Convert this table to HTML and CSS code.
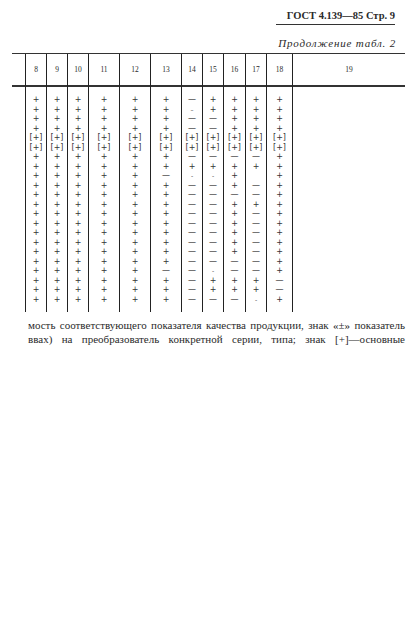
FILE: index.html
```html
<!DOCTYPE html>
<html lang="ru">
<head>
<meta charset="utf-8">
<title>ГОСТ 4.139—85 Стр. 9</title>
<link rel="stylesheet" href="styles.css">
</head>
<body>
<div class="page">
  <div class="top"><div class="gost">ГОСТ 4.139—85 Стр. 9</div></div>
  <div class="cont">Продолжение табл. 2</div>
  <div class="tbl">
    <div class="col first"><div class="h"></div><div class="b"></div></div>
    <div class="col"><div class="h">8</div><div class="b"><span>+</span><span>+</span><span>+</span><span>+</span><span>[+]</span><span>[+]</span><span>+</span><span>+</span><span>+</span><span>+</span><span>+</span><span>+</span><span>+</span><span>+</span><span>+</span><span>+</span><span>+</span><span>+</span><span>+</span><span>+</span><span>+</span><span>+</span></div></div>
    <div class="col"><div class="h">9</div><div class="b"><span>+</span><span>+</span><span>+</span><span>+</span><span>[+]</span><span>[+]</span><span>+</span><span>+</span><span>+</span><span>+</span><span>+</span><span>+</span><span>+</span><span>+</span><span>+</span><span>+</span><span>+</span><span>+</span><span>+</span><span>+</span><span>+</span><span>+</span></div></div>
    <div class="col"><div class="h">10</div><div class="b"><span>+</span><span>+</span><span>+</span><span>+</span><span>[+]</span><span>[+]</span><span>+</span><span>+</span><span>+</span><span>+</span><span>+</span><span>+</span><span>+</span><span>+</span><span>+</span><span>+</span><span>+</span><span>+</span><span>+</span><span>+</span><span>+</span><span>+</span></div></div>
    <div class="col"><div class="h">11</div><div class="b"><span>+</span><span>+</span><span>+</span><span>+</span><span>[+]</span><span>[+]</span><span>+</span><span>+</span><span>+</span><span>+</span><span>+</span><span>+</span><span>+</span><span>+</span><span>+</span><span>+</span><span>+</span><span>+</span><span>+</span><span>+</span><span>+</span><span>+</span></div></div>
    <div class="col"><div class="h">12</div><div class="b"><span>+</span><span>+</span><span>+</span><span>+</span><span>[+]</span><span>[+]</span><span>+</span><span>+</span><span>+</span><span>+</span><span>+</span><span>+</span><span>+</span><span>+</span><span>+</span><span>+</span><span>+</span><span>+</span><span>+</span><span>+</span><span>+</span><span>+</span></div></div>
    <div class="col"><div class="h">13</div><div class="b"><span>+</span><span>+</span><span>+</span><span>+</span><span>[+]</span><span>[+]</span><span>+</span><span>+</span><span class="d">—</span><span>+</span><span>+</span><span>+</span><span>+</span><span>+</span><span>+</span><span>+</span><span>+</span><span>+</span><span class="d">—</span><span>+</span><span>+</span><span>+</span></div></div>
    <div class="col"><div class="h">14</div><div class="b"><span class="d">—</span><span class="s">–</span><span class="d">—</span><span class="d">—</span><span>[+]</span><span>[+]</span><span class="d">—</span><span>+</span><span class="s">-</span><span class="d">—</span><span class="d">—</span><span class="d">—</span><span class="d">—</span><span class="d">—</span><span class="d">—</span><span class="d">—</span><span class="d">—</span><span class="d">—</span><span class="d">—</span><span class="d">—</span><span class="d">—</span><span class="d">—</span></div></div>
    <div class="col"><div class="h">15</div><div class="b"><span>+</span><span>+</span><span class="d">—</span><span class="d">—</span><span>[+]</span><span>[+]</span><span class="d">—</span><span>+</span><span class="s">-</span><span class="d">—</span><span class="d">—</span><span class="d">—</span><span class="d">—</span><span class="d">—</span><span class="d">—</span><span class="d">—</span><span class="d">—</span><span class="d">—</span><span class="s">-</span><span>+</span><span>+</span><span class="d">—</span></div></div>
    <div class="col"><div class="h">16</div><div class="b"><span>+</span><span>+</span><span>+</span><span>+</span><span>[+]</span><span>[+]</span><span class="d">—</span><span>+</span><span>+</span><span>+</span><span class="d">—</span><span>+</span><span>+</span><span>+</span><span>+</span><span>+</span><span>+</span><span class="d">—</span><span class="d">—</span><span>+</span><span>+</span><span class="d">—</span></div></div>
    <div class="col"><div class="h">17</div><div class="b"><span>+</span><span>+</span><span>+</span><span>+</span><span>[+]</span><span>[+]</span><span class="d">—</span><span>+</span><span></span><span class="d">—</span><span class="d">—</span><span>+</span><span class="d">—</span><span class="d">—</span><span class="d">—</span><span class="d">—</span><span class="d">—</span><span class="d">—</span><span class="d">—</span><span>+</span><span>+</span><span class="s">-</span></div></div>
    <div class="col"><div class="h">18</div><div class="b"><span>+</span><span>+</span><span>+</span><span>+</span><span>[+]</span><span>[+]</span><span>+</span><span>+</span><span>+</span><span>+</span><span>+</span><span>+</span><span>+</span><span>+</span><span>+</span><span>+</span><span>+</span><span>+</span><span>+</span><span class="d">—</span><span class="d">—</span><span>+</span></div></div>
    <div class="col last"><div class="h">19</div><div class="b"></div></div>
  </div>
  <div class="text">
    <div class="line">мость соответствующего показателя качества продукции, знак «±» показатель</div>
    <div class="line">ввах) на преобразователь конкретной серии, типа; знак [+]—основные</div>
  </div>
</div>
</body>
</html>
```
FILE: styles.css
```css
html, body {
  margin: 0;
  padding: 0;
  background: #fff;
}
.page {
  width: 417px;
  height: 623px;
  background: #fff;
  color: #2a2a2a;
  font-family: "Liberation Serif", "Times New Roman", serif;
  overflow: hidden;
}
.top {
  display: flex;
  justify-content: flex-end;
  padding-top: 10px;
  padding-right: 22px;
}
.gost {
  font-weight: bold;
  font-size: 10.5px;
  line-height: 12px;
  padding-left: 11px;
  padding-bottom: 2px;
  border-bottom: 1px solid #333;
}
.cont {
  margin-top: 12px;
  margin-right: 21px;
  text-align: right;
  font-style: italic;
  font-size: 11px;
  line-height: 12px;
  letter-spacing: 0.8px;
}
.tbl {
  margin-top: 4px;
  margin-left: 12px;
  width: 393px;
  display: grid;
  grid-template-columns: 13px 21px 21px 21px 31px 31px 31px 21px 21px 22px 21px 26px 113px;
  border-top: 1.5px solid #333;
}
.col {
  display: flex;
  flex-direction: column;
  border-left: 1px solid #222;
}
.col.first {
  border-left: none;
}
.col.last {
  border-left-width: 1.5px;
}
.h {
  height: 31px;
  display: flex;
  align-items: center;
  justify-content: center;
  font-size: 7.5px;
  border-bottom: 2px solid #333;
}
.b {
  height: 209px;
  padding: 8px 0;
  display: flex;
  flex-direction: column;
  color: #333;
  opacity: 0.99;
}
.b span {
  display: block;
  height: 9.5px;
  line-height: 9.5px;
  font-family: "DejaVu Sans", sans-serif;
  font-size: 8px;
  text-align: center;
}
.b span.d {
  font-size: 8px;
}
.b span.s {
  font-size: 6px;
}
.text {
  margin-top: 6px;
  padding-left: 28px;
  font-size: 11px;
  line-height: 14px;
}
.line {
  width: 377px;
  text-align: justify;
  text-align-last: justify;
}
```
